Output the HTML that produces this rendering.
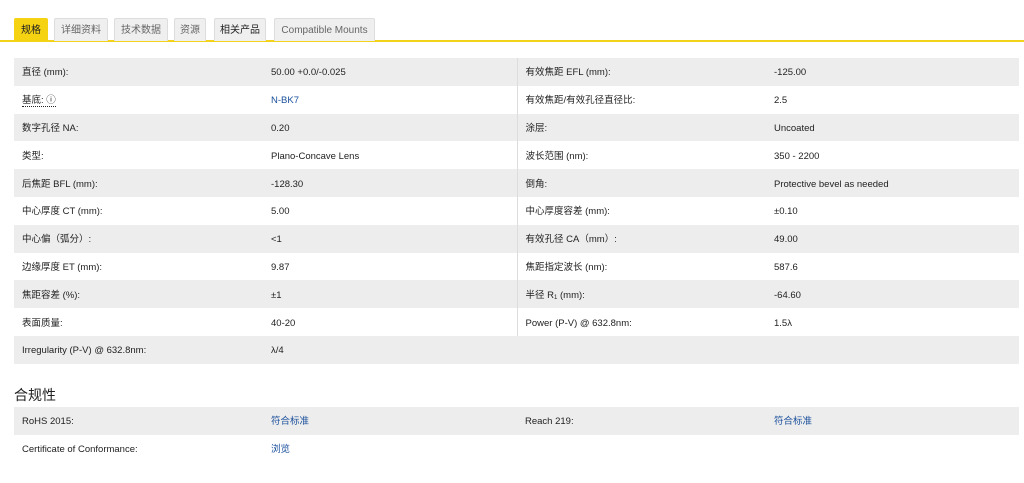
<!DOCTYPE html><html><head><meta charset="utf-8"><style>
body{margin:0;background:#fff;font-family:"Liberation Sans","Noto Sans CJK SC",sans-serif;color:#222;width:1024px;height:483px;overflow:hidden;position:relative}
.tabs{position:absolute;top:17px;left:0;width:1024px;height:25px;border-bottom:2px solid #f3d21a;box-sizing:border-box}
.tab{position:absolute;top:1px;height:23px;background:#efefef;border:1px solid #ddd;border-bottom:none;box-sizing:border-box;font-size:10px;color:#666;text-align:center;line-height:24px;border-radius:2px 2px 0 0}
.tab.a{background:#f5d312;border-color:#f5d312;color:#222}
table{position:absolute;left:14px;width:1005px;border-collapse:collapse;font-size:9.5px;table-layout:fixed}
td{height:27.8px;padding:3px 0 0 8px;box-sizing:border-box;vertical-align:middle;line-height:12px;white-space:nowrap}
td span,td a{vertical-align:middle}
tr:nth-child(odd) td{background:#ededed}
td.l2{border-left:1px solid #ddd}
a{color:#1a4f9c;text-decoration:none}
h3{position:absolute;left:14px;top:385px;margin:0;font-size:14px;font-weight:normal;color:#222}
sub{font-size:6px;line-height:0;vertical-align:-1px}
</style></head><body>
<div class="tabs">
<div class="tab a" style="left:14px;width:34px">规格</div>
<div class="tab" style="left:54px;width:54px">详细资料</div>
<div class="tab" style="left:114px;width:54px">技术数据</div>
<div class="tab" style="left:174px;width:32px">资源</div>
<div class="tab" style="left:214px;width:52px;color:#222">相关产品</div>
<div class="tab" style="left:274px;width:101px">Compatible Mounts</div>
</div>
<table style="top:58px">
<col style="width:249px"><col style="width:254px"><col style="width:249px"><col>
<tr><td>直径 (mm):</td><td>50.00 +0.0/-0.025</td><td class="l2">有效焦距 EFL (mm):</td><td>-125.00</td></tr>
<tr><td><span style="border-bottom:1px dotted #222">基底: ⓘ</span></td><td><a>N-BK7</a></td><td class="l2">有效焦距/有效孔径直径比:</td><td>2.5</td></tr>
<tr><td>数字孔径 NA:</td><td>0.20</td><td class="l2">涂层:</td><td>Uncoated</td></tr>
<tr><td>类型:</td><td>Plano-Concave Lens</td><td class="l2">波长范围 (nm):</td><td>350 - 2200</td></tr>
<tr><td>后焦距 BFL (mm):</td><td>-128.30</td><td class="l2">倒角:</td><td>Protective bevel as needed</td></tr>
<tr><td>中心厚度 CT (mm):</td><td>5.00</td><td class="l2">中心厚度容差 (mm):</td><td>±0.10</td></tr>
<tr><td>中心偏（弧分）:</td><td>&lt;1</td><td class="l2">有效孔径 CA（mm）:</td><td>49.00</td></tr>
<tr><td>边缘厚度 ET (mm):</td><td>9.87</td><td class="l2">焦距指定波长 (nm):</td><td>587.6</td></tr>
<tr><td>焦距容差 (%):</td><td>±1</td><td class="l2">半径 R<sub>1</sub> (mm):</td><td>-64.60</td></tr>
<tr><td>表面质量:</td><td>40-20</td><td class="l2">Power (P-V) @ 632.8nm:</td><td>1.5λ</td></tr>
<tr><td>Irregularity (P-V) @ 632.8nm:</td><td>λ/4</td><td></td><td></td></tr>
</table>
<h3>合规性</h3>
<table style="top:407px">
<col style="width:249px"><col style="width:254px"><col style="width:249px"><col>
<tr><td>RoHS 2015:</td><td><a>符合标准</a></td><td>Reach 219:</td><td><a>符合标准</a></td></tr>
<tr><td>Certificate of Conformance:</td><td><a>浏览</a></td><td></td><td></td></tr>
</table>
</body></html>
